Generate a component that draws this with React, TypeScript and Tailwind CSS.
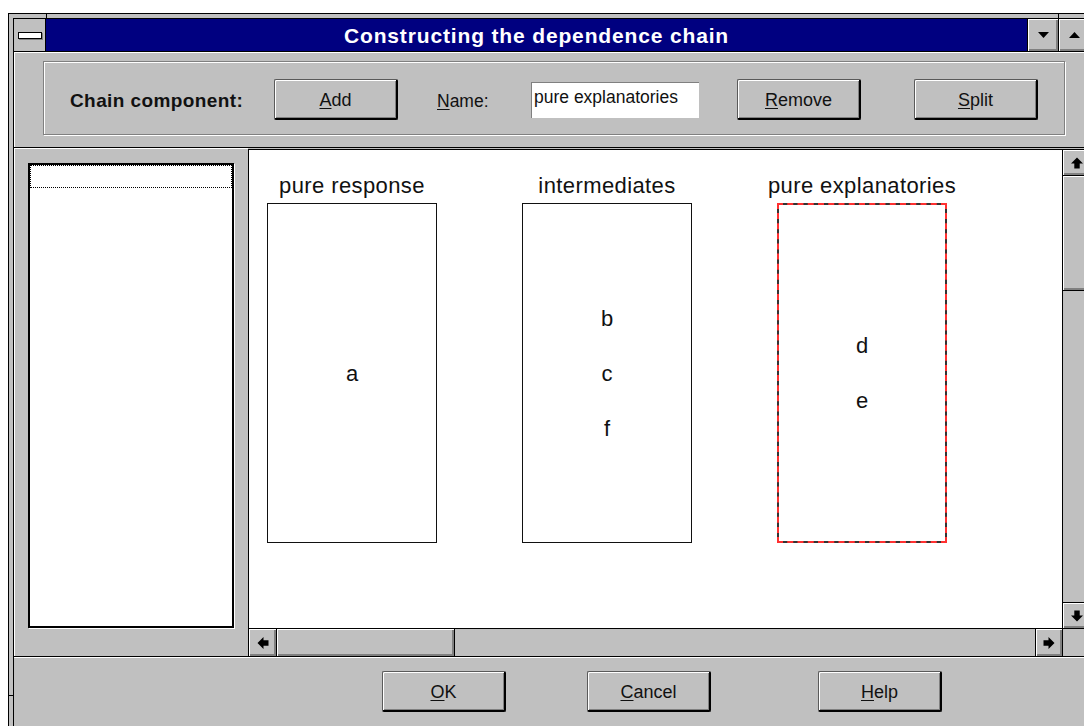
import type { ReactNode } from 'react'

const raised =
  'bg-[#c0c0c0] shadow-[inset_1px_1px_0_#fff,inset_-1px_-1px_0_#808080,inset_-2px_-2px_0_#808080]'

function Arrow({ dir }: { dir: 'up' | 'down' | 'left' | 'right' }) {
  const rot = { up: 0, right: 90, down: 180, left: 270 }[dir]
  return (
    <svg width="12" height="12" viewBox="0 0 12 12" style={{ transform: `rotate(${rot}deg)` }}>
      <polygon points="6,0.5 12,6.5 8.7,6.5 8.7,11.5 3.3,11.5 3.3,6.5 0,6.5" fill="#000" />
    </svg>
  )
}

function Tri({ up }: { up?: boolean }) {
  return (
    <svg width="11" height="6" viewBox="0 0 11 6">
      <polygon points={up ? '0,6 11,6 5.5,0' : '0,0 11,0 5.5,6'} fill="#000" />
    </svg>
  )
}

function PushButton({ children }: { children: ReactNode }) {
  return (
    <div className="h-[41px] w-[124px] shrink-0 flex items-center justify-center pt-[3px] rounded-[2px] border-t border-l border-[#5a5a5a] border-r-2 border-b-2 border-r-black border-b-black bg-[#c0c0c0] shadow-[inset_1px_1px_0_#fff,inset_-1px_-1px_0_#808080] text-[18px] text-[#111]">
      {children}
    </div>
  )
}

function Column({ title, items, selected }: { title: string; items: string[]; selected?: boolean }) {
  const inner = (
    <div className="h-full w-full bg-white flex flex-col items-center justify-center text-[22px] text-[#111]">
      {items.map((it) => (
        <div key={it} className="leading-[55px] h-[55px]">
          {it}
        </div>
      ))}
    </div>
  )
  return (
    <div className="w-[170px] shrink-0 flex flex-col items-center">
      <div className="text-[22px] leading-[26px] tracking-[0.4px] text-[#111] whitespace-nowrap mb-[4px]">{title}</div>
      {selected ? (
        <div className="w-[170px] h-[340px] border-2 border-dashed border-[#ff3030] bg-[#333]">{inner}</div>
      ) : (
        <div className="w-[170px] h-[340px] border border-[#111]">{inner}</div>
      )}
    </div>
  )
}

export default function App() {
  return (
    <div className="w-[1084px] h-[726px] overflow-hidden bg-white pt-[13px] pl-[8px] font-['Liberation_Sans',Arial,sans-serif] text-black">
      {/* window frame */}
      <div className="relative w-[1090px] h-[720px] border-l border-t border-black bg-[#c0c0c0] pl-[4px] pt-[4px]">
        <div className="absolute left-[37px] top-0 w-px h-[4px] bg-black" />
        <div className="absolute left-[1049px] top-0 w-px h-[4px] bg-black" />
        <div className="absolute left-0 top-[681px] w-[4px] h-px bg-black" />

        <div className="w-[1078px] h-[716px] border border-black bg-[#c0c0c0] flex flex-col">
          {/* caption */}
          <div className="h-[33px] shrink-0 flex border-b border-black">
            <div className="w-[32px] shrink-0 border-r border-black bg-[#c0c0c0] flex items-center justify-center">
              <div className="w-[24px] h-[7px] bg-white border border-black shadow-[1px_1px_0_#808080]" />
            </div>
            <div className="flex-1 bg-[#000080] border-r border-black flex items-center justify-center">
              <span className="text-white font-bold text-[21px] tracking-[0.85px] leading-none">
                Constructing the dependence chain
              </span>
            </div>
            <div className={`w-[31px] shrink-0 border-r border-black flex items-center justify-center ${raised}`}>
              <Tri />
            </div>
            <div className={`w-[31px] shrink-0 flex items-center justify-center ${raised}`}>
              <Tri up />
            </div>
          </div>

          {/* chain component toolbar */}
          <div className="h-[96px] shrink-0 border-b border-black pt-[9px] pl-[29px] shadow-[inset_1px_1px_0_#fff]">
            <div className="w-[1022px] h-[74px] border border-[#808080] shadow-[inset_1px_1px_0_#fff,1px_1px_0_#fff] flex items-center pt-[3px]">
              <div className="w-[230px] shrink-0 pl-[26px] font-bold text-[19px] tracking-[0.4px] text-[#111] pt-[4px]">
                Chain component:
              </div>
              <PushButton>
                <span>
                  <u className="underline-offset-2">A</u>dd
                </span>
              </PushButton>
              <div className="ml-[39px] w-[94px] shrink-0 text-[17.5px] text-[#111] pt-[4px]">
                <u className="underline-offset-2">N</u>ame:
              </div>
              <div className="w-[168px] h-[36px] shrink-0 bg-white border-t border-l border-[#808080] pl-[2px] pt-[3px] text-[17.5px] text-[#111] leading-[22px] whitespace-nowrap">
                pure explanatories
              </div>
              <div className="ml-[38px]">
                <PushButton>
                  <span>
                    <u className="underline-offset-2">R</u>emove
                  </span>
                </PushButton>
              </div>
              <div className="ml-[53px]">
                <PushButton>
                  <span>
                    <u className="underline-offset-2">S</u>plit
                  </span>
                </PushButton>
              </div>
            </div>
          </div>

          {/* list + chain canvas */}
          <div className="h-[509px] shrink-0 flex border-b border-black">
            <div className="w-[234px] shrink-0 pl-[14px] pt-[15px] shadow-[inset_1px_1px_0_#fff]">
              <div className="w-[206px] h-[465px] bg-white border-2 border-black shadow-[1px_1px_0_#fff]">
                <div className="h-[23px] border border-dotted border-black" />
              </div>
            </div>

            <div className="flex-1 mt-[1px] border-t border-l border-black flex flex-col">
              <div className="h-[478px] shrink-0 flex">
                <div className="flex-1 bg-white pl-[18px] pt-[23px] flex gap-[85px]">
                  <Column title="pure response" items={['a']} />
                  <Column title="intermediates" items={['b', 'c', 'f']} />
                  <Column title="pure explanatories" items={['d', 'e']} selected />
                </div>
                {/* vertical scrollbar */}
                <div className="w-[28px] shrink-0 border-l border-black bg-[#c0c0c0] flex flex-col">
                  <div className={`h-[26px] shrink-0 border-b border-black flex items-center justify-center ${raised}`}>
                    <Arrow dir="up" />
                  </div>
                  <div className={`h-[115px] shrink-0 border-b border-black ${raised}`} />
                  <div className="flex-1" />
                  <div className={`h-[26px] shrink-0 border-t border-black flex items-center justify-center ${raised}`}>
                    <Arrow dir="down" />
                  </div>
                </div>
              </div>
              {/* horizontal scrollbar */}
              <div className="flex-1 border-t border-black flex bg-[#c0c0c0]">
                <div className={`w-[28px] shrink-0 border-r border-black flex items-center justify-center ${raised}`}>
                  <Arrow dir="left" />
                </div>
                <div className={`w-[178px] shrink-0 border-r border-black ${raised}`} />
                <div className="flex-1" />
                <div className={`w-[27px] shrink-0 border-l border-black flex items-center justify-center ${raised}`}>
                  <Arrow dir="right" />
                </div>
                <div className="w-[28px] shrink-0 border-l border-black bg-[#c0c0c0]" />
              </div>
            </div>
          </div>

          {/* dialog buttons */}
          <div className="flex-1 border-t border-white pt-[13px] pl-[368px] flex">
            <PushButton>
              <span>
                <u className="underline-offset-2">O</u>K
              </span>
            </PushButton>
            <div className="ml-[81px]">
              <PushButton>
                <span>
                  <u className="underline-offset-2">C</u>ancel
                </span>
              </PushButton>
            </div>
            <div className="ml-[107px]">
              <PushButton>
                <span>
                  <u className="underline-offset-2">H</u>elp
                </span>
              </PushButton>
            </div>
          </div>
        </div>
      </div>
    </div>
  )
}
